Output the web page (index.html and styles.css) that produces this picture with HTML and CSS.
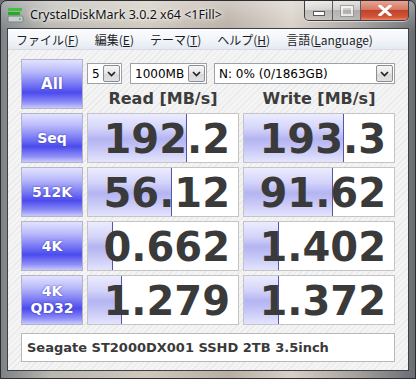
FILE: index.html
```html
<!DOCTYPE html>
<html lang="ja">
<head>
  <meta charset="UTF-8">
  <title>CrystalDiskMark 3.0.2 x64</title>
  <link rel="stylesheet" href="styles.css">
</head>
<body>
  <div class="window">
    <div class="titlebar">
      <svg class="app-icon" width="17" height="16" viewBox="0 0 17 16">
        <rect x="1" y="1" width="14" height="3" fill="#3cc43c"/>
        <rect x="1" y="5" width="12" height="3" fill="#2aa82a"/>
        <rect x="1" y="9" width="15" height="6" rx="1.5" fill="#c9ccd0" stroke="#7d8288"/>
        <rect x="12" y="11" width="2" height="2" fill="#4ad04a"/>
      </svg>
      <span class="title-text">CrystalDiskMark 3.0.2 x64 &lt;1Fill&gt;</span>
      <div class="caption-buttons">
        <div class="cap-btn cap-min"><span class="glyph-min"></span></div>
        <div class="cap-btn cap-max"><span class="glyph-max"></span></div>
        <div class="cap-btn cap-close">
          <svg width="14" height="11" viewBox="0 0 14 11">
            <path d="M2 1 L12 10 M12 1 L2 10" stroke="#fff" stroke-width="3" stroke-linecap="square"/>
          </svg>
        </div>
      </div>
    </div>

    <div class="client">
      <div class="menubar">
        <span class="menu-item">ファイル(<u>F</u>)</span>
        <span class="menu-item">編集(<u>E</u>)</span>
        <span class="menu-item">テーマ(<u>T</u>)</span>
        <span class="menu-item">ヘルプ(<u>H</u>)</span>
        <span class="menu-item">言語(<u>L</u>anguage)</span>
      </div>

      <div class="panel">
        <div class="bench">
          <div class="test-btn test-all">All</div>
          <div class="controls">
            <div class="selects">
              <div class="combo combo-count"><span class="combo-text">5</span><span class="combo-arrow"></span></div>
              <div class="combo combo-size"><span class="combo-text">1000MB</span><span class="combo-arrow"></span></div>
              <div class="combo combo-drive"><span class="combo-text">N: 0% (0/1863GB)</span><span class="combo-arrow"></span></div>
            </div>
            <div class="headers">
              <div class="col-head">Read [MB/s]</div>
              <div class="col-head">Write [MB/s]</div>
            </div>
          </div>

          <div class="test-btn">Seq</div>
          <div class="cell"><div class="fill" style="width: 98px"></div><span class="value">192.2</span></div>
          <div class="cell"><div class="fill" style="width: 99px"></div><span class="value">193.3</span></div>

          <div class="test-btn">512K</div>
          <div class="cell"><div class="fill" style="width: 83px"></div><span class="value">56.12</span></div>
          <div class="cell"><div class="fill" style="width: 88px"></div><span class="value">91.62</span></div>

          <div class="test-btn">4K</div>
          <div class="cell"><div class="fill" style="width: 24px"></div><span class="value">0.662</span></div>
          <div class="cell"><div class="fill" style="width: 34px"></div><span class="value">1.402</span></div>

          <div class="test-btn test-qd">4K<br>QD32</div>
          <div class="cell"><div class="fill" style="width: 33px"></div><span class="value">1.279</span></div>
          <div class="cell"><div class="fill" style="width: 34px"></div><span class="value">1.372</span></div>
        </div>

        <div class="drive-name">Seagate ST2000DX001 SSHD 2TB 3.5inch</div>
      </div>
    </div>
  </div>
</body>
</html>
```

FILE: styles.css
```css
body {
  margin: 0;
  width: 416px;
  height: 379px;
  overflow: hidden;
  background: #6d6f72;
}
.window {
  width: 416px;
  height: 379px;
  box-sizing: border-box;
  border: 1px solid #2b2d30;
  border-radius: 7px 7px 0 0;
  display: flex;
  flex-direction: column;
  background:
    linear-gradient(180deg, rgba(255,255,255,0.35) 0%, rgba(255,255,255,0) 30px),
    linear-gradient(90deg, #7d8286 0%, #b9b7b0 12%, #cfc8bd 35%, #b8aea4 55%, #d7d0c6 70%, #a9a49f 85%, #6a6e73 100%);
}
/* Title bar */
.titlebar {
  height: 27px;
  display: flex;
  align-items: center;
  padding-left: 6px;
}
.app-icon { margin-right: 6px; margin-top: 1px; }
.title-text {
  font-family: "Noto Sans", "DejaVu Sans", sans-serif;
  font-size: 12.5px;
  color: #111;
  text-shadow: 0 0 6px #fff, 0 0 3px #fff;
}
.caption-buttons {
  margin-left: auto;
  margin-right: 6px;
  align-self: flex-start;
  display: flex;
  height: 19px;
  border: 1px solid #3c3e42;
  border-top: none;
  border-radius: 0 0 5px 5px;
  overflow: hidden;
  box-shadow: 0 1px 0 rgba(255,255,255,0.5);
}
.cap-btn {
  display: flex;
  align-items: center;
  justify-content: center;
  width: 27px;
  background: linear-gradient(180deg, rgba(255,255,255,0.55) 0%, rgba(230,230,230,0.35) 45%, rgba(150,150,150,0.35) 50%, rgba(200,200,200,0.45) 100%);
  border-right: 1px solid #5a5c60;
}
.cap-close {
  width: 47px;
  border-right: none;
  background: linear-gradient(180deg, #e8a493 0%, #d47a64 45%, #c0432a 50%, #d4553a 85%, #e88a6a 100%);
}
.glyph-min {
  width: 10px;
  height: 3px;
  margin-top: 6px;
  background: #fff;
  border: 1px solid #55585d;
}
.glyph-max {
  width: 8px;
  height: 6px;
  border: 2px solid #fff;
  outline: 1px solid #8a8c90;
  opacity: 0.7;
}
/* Client area */
.client {
  flex: 1;
  margin: 0 6px 7px 6px;
  border: 1px solid #3e4044;
  display: flex;
  flex-direction: column;
  background: repeating-linear-gradient(135deg, #f4f4f4 0px, #f4f4f4 3px, #e9e9e9 3px, #e9e9e9 4px);
}
.menubar {
  height: 20px;
  display: flex;
  align-items: center;
  padding-left: 8px;
  gap: 16px;
  background: linear-gradient(180deg, #fbfcfe 0%, #f1f4f9 60%, #e4e9f2 100%);
  border-bottom: 1px solid #d5dae3;
  font-family: "Noto Sans CJK JP", "Noto Sans", sans-serif;
  font-size: 12px;
  color: #1e1e1e;
}
.menu-item u { text-decoration-thickness: 1px; text-underline-offset: 1px; }
.panel {
  padding: 9px 13px 0 13px;
}
.bench {
  display: grid;
  grid-template-columns: 62px 152px 152px;
  grid-auto-rows: 50px;
  gap: 4px;
}
.test-btn {
  display: flex;
  align-items: center;
  justify-content: center;
  text-align: center;
  box-sizing: border-box;
  border: 1px solid #b4b4c8;
  background: linear-gradient(180deg, #e2e2ff 0%, #b8b8fb 25%, #6d6df3 55%, #4b4bee 68%, #8c8cf6 88%, #c9c9fd 100%);
  font-family: "DejaVu Sans", Verdana, sans-serif;
  font-weight: bold;
  font-size: 14px;
  color: #fff;
  text-shadow: 0 0 2px #3838b0;
}
.test-all { font-size: 15px; }
.test-qd { font-size: 14px; line-height: 17px; }
.controls {
  grid-column: 2 / 4;
  display: flex;
  flex-direction: column;
}
.selects {
  margin-top: 4px;
  display: flex;
  gap: 7px;
  height: 21px;
}
.combo {
  display: flex;
  align-items: center;
  box-sizing: border-box;
  height: 21px;
  border: 1px solid #9ea2a8;
  background: #fff;
  padding: 1px;
}
.combo-count { width: 35px; margin-right: 1px; }
.combo-size { width: 77px; }
.combo-drive { width: 181px; }
.combo-text {
  flex: 1;
  padding-left: 3px;
  font-family: "DejaVu Sans", Verdana, sans-serif;
  font-size: 12px;
  color: #000;
  white-space: nowrap;
  overflow: hidden;
}
.combo-arrow {
  flex: none;
  width: 17px;
  height: 17px;
  box-sizing: border-box;
  border: 1px solid #8a8d92;
  border-radius: 2px;
  background:
    url("data:image/svg+xml,%3Csvg xmlns='http://www.w3.org/2000/svg' width='9' height='6' viewBox='0 0 9 6'%3E%3Cpath d='M1 1 L4.5 4.5 L8 1' fill='none' stroke='%23202020' stroke-width='1.6'/%3E%3C/svg%3E") center no-repeat,
    linear-gradient(180deg, #f6f6f6 0%, #e6e6e6 50%, #d6d6d6 51%, #e2e2e2 100%);
}
.headers {
  display: grid;
  grid-template-columns: 152px 152px;
  gap: 4px;
  margin-top: 6px;
}
.col-head {
  text-align: center;
  font-family: "DejaVu Sans", Verdana, sans-serif;
  font-weight: bold;
  font-size: 16px;
  line-height: 18px;
  color: #3c3c3c;
}
.cell {
  position: relative;
  box-sizing: border-box;
  border: 1px solid #c4c4c4;
  background: #fff;
  display: flex;
  align-items: center;
  justify-content: flex-end;
  padding-right: 8px;
  overflow: hidden;
}
.fill {
  position: absolute;
  left: 0;
  top: 0;
  bottom: 0;
  border-right: 1px solid #5656a8;
  background: linear-gradient(180deg, #ececff 0%, #d4d4fa 30%, #b4b4f2 52%, #c4c4f6 70%, #e4e4fd 100%);
}
.value {
  position: relative;
  font-family: "DejaVu Sans", Verdana, sans-serif;
  font-weight: bold;
  font-size: 40px;
  line-height: 40px;
  color: #3a3a3a;
  margin-top: 1px;
}
.drive-name {
  margin-top: 8px;
  height: 29px;
  box-sizing: border-box;
  border: 1px solid #b8b8b8;
  background: #fff;
  display: flex;
  align-items: center;
  padding-left: 5px;
  font-family: "DejaVu Sans", Verdana, sans-serif;
  font-weight: bold;
  font-size: 13px;
  color: #3a3a3a;
}
```
